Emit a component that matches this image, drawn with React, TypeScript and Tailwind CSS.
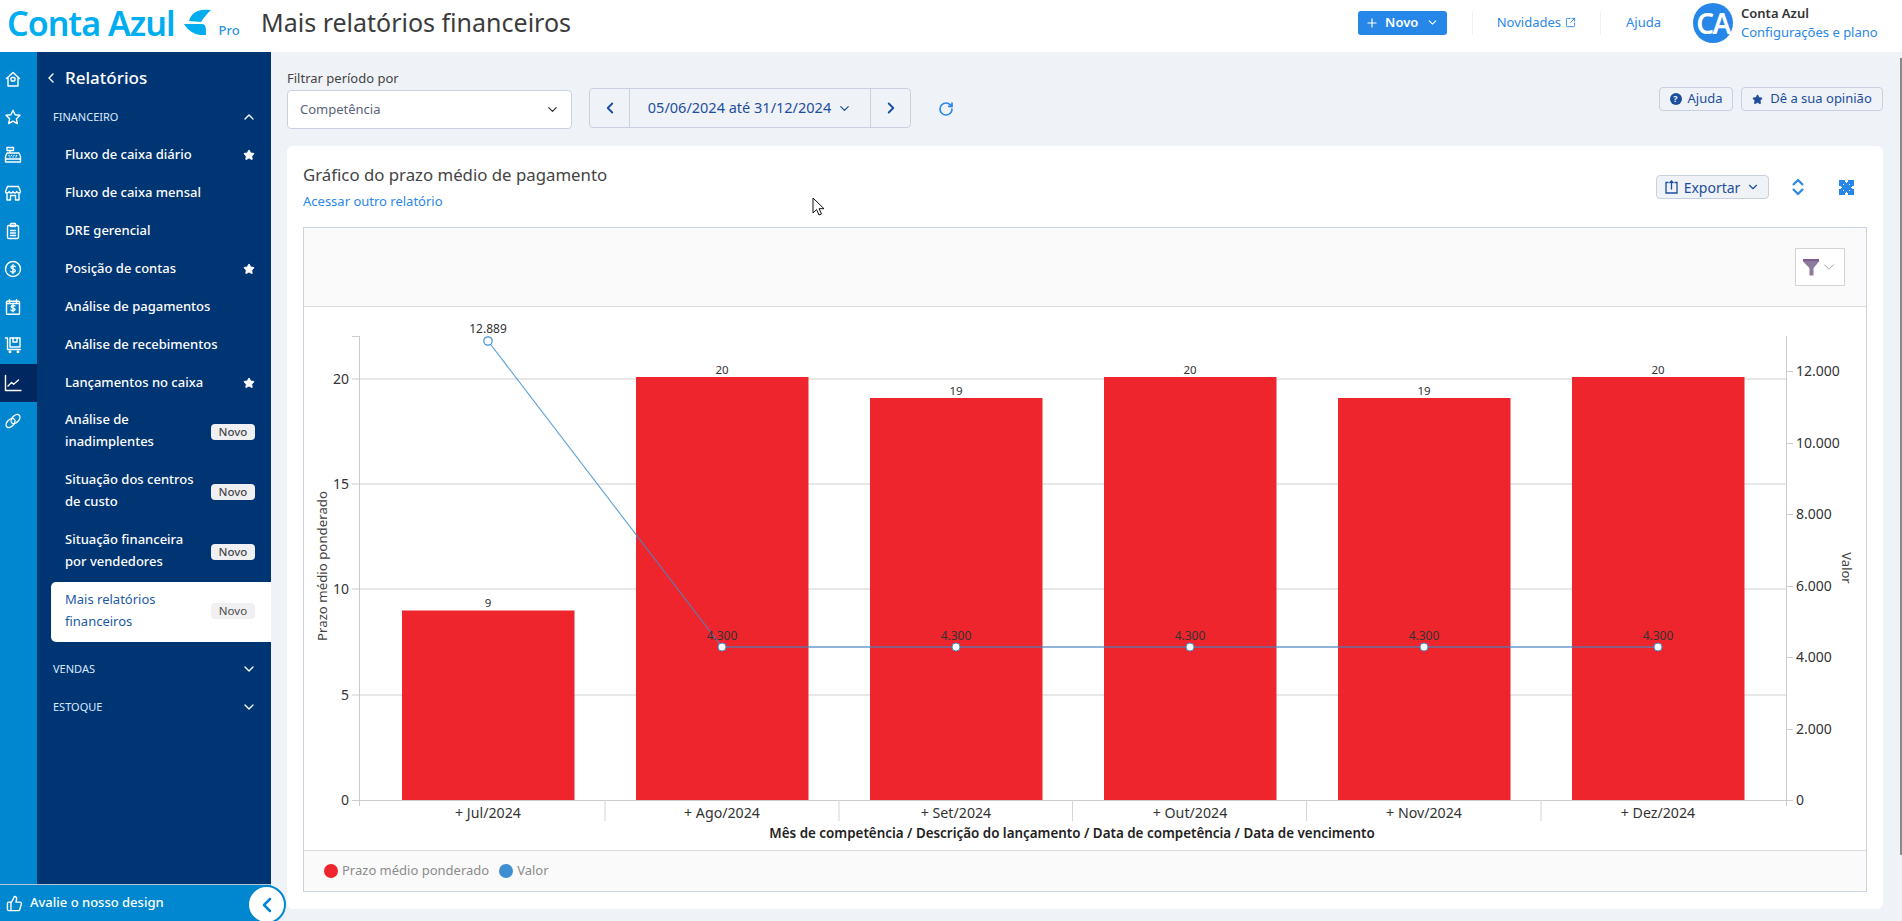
import React from "react";
import { ChevronLeft, ChevronRight, ChevronDown, ChevronUp, Star, Plus, RotateCw, SquareArrowOutUpRight, ThumbsUp } from "lucide-react";

const S = { fill: "none", stroke: "white", strokeWidth: 1.4, strokeLinecap: "round" as const, strokeLinejoin: "round" as const };

function RailIcon({ i }: { i: number }) {
  const c = (
    [
      <g key="h"><path d="M2.5 8.5 9 2.5l6.5 6M4 7.5V16h10V7.5" /><rect x="7" y="7.5" width="4" height="3.5" rx="1" /></g>,
      <path key="s" d="M9 2.2l2.1 4.5 4.9.6-3.6 3.4.9 4.9L9 13.2l-4.3 2.4.9-4.9L2 7.3l4.9-.6z" />,
      <g key="r"><rect x="3" y="1.5" width="6.500" height="3" /><path d="M6 4.500v2.500M3 7h12l1.500 3.500v5.500h-15v-5.500zM1.500 13h15M5 9.500h0M7.500 9.500h0M10 9.500h0M12.500 9.500h0M6 11h0M9 11h0M12 11h0" /></g>,
      <g key="st"><path d="M3.500 2.500h11l2 5c0 2-3 2-3.700 0-.6 2-3 2-3.800 0-.8 2-3.200 2-3.800 0-.7 2-3.700 2-3.700 0zM3 10v6h3.500v-4.500h5V16H15v-6" /></g>,
      <g key="c"><rect x="3.500" y="3.500" width="11" height="13" rx="1.200" /><rect x="6.500" y="1.500" width="5" height="3" rx=".6" /><path d="M6.500 8.500h5M6.500 11h5M6.500 13.500h5" /></g>,
      <g key="d"><circle cx="9" cy="9" r="7.500" /><path d="M11.200 6.600C10.600 5.600 7 5.400 7 7.300c0 2 4.300 1.300 4.300 3.400 0 1.900-3.700 1.800-4.500.7M9 4.600v8.800" /></g>,
      <g key="cd"><rect x="2.500" y="3.200" width="13" height="13" rx=".8" /><path d="M5.500 1.500v3M12.500 1.500v3M2.500 5.500h13M11 8c-.5-.8-3.800-.9-3.800.7 0 1.800 3.800 1 3.800 2.800 0 1.600-3.300 1.500-4 .6M9 6.800v7" /></g>,
      <g key="cb"><path d="M1.500 2h2v11.500h13" /><rect x="6" y="2" width="10" height="9" /><path d="M9 2v4h4V2" /><circle cx="6" cy="15.700" r=".8" /><circle cx="14" cy="15.700" r=".8" /></g>,
      <g key="ch"><path d="M1.500 1.500v15h15.500" /><path d="M4 12l3.600-3.500 2 1.700L14.500 6" /></g>,
      <g key="l"><ellipse cx="6.500" cy="11" rx="5.400" ry="3.400" transform="rotate(-48 6.500 11)" /><ellipse cx="11.500" cy="7" rx="5.400" ry="3.400" transform="rotate(-48 11.500 7)" /></g>,
    ] as React.ReactNode[]
  )[i];
  return (
    <svg width="18" height="18" viewBox="0 0 18 18" {...S}>
      {c}
    </svg>
  );
}

function Badge() {
  return <span className="flex h-[16px] w-[44px] shrink-0 items-center justify-center rounded-[4px] bg-[#f0f0f2] text-[11.5px] text-[#4a4a4a]">Novo</span>;
}

function FilledStar() {
  return <Star size={12} className="shrink-0 fill-white text-white" />;
}

function NavItem({ label, star }: { label: string; star?: boolean }) {
  return (
    <div className="flex h-[38px] items-center justify-between pl-[28px] pr-[16px] text-[13px] font-medium text-white">
      <span>{label}</span>
      {star && <FilledStar />}
    </div>
  );
}

function NavItem2({ a, b }: { a: string; b: string }) {
  return (
    <div className="flex h-[60px] items-center justify-between pl-[28px] pr-[16px] text-[13px] font-medium leading-[22px] text-white">
      <span className="mb-[4px]">
        {a}
        <br />
        {b}
      </span>
      <span className="mb-[1px]">
        <Badge />
      </span>
    </div>
  );
}

function Section({ label, open }: { label: string; open?: boolean }) {
  return (
    <div className="flex h-[38px] items-center justify-between pl-[16px] pr-[14px] text-[11px] text-[#dbe9ff]">
      <span>{label}</span>
      {open ? <ChevronUp size={16} className="text-white" /> : <ChevronDown size={16} className="text-white" />}
    </div>
  );
}

function Sidebar() {
  return (
    <aside className="relative flex w-[271px] shrink-0 flex-col">
      <div className="flex flex-1">
        <div className="flex w-[37px] flex-col bg-[#0087cf] pt-[8px]">
          {[0, 1, 2, 3, 4, 5, 6, 7, 8, 9].map((i) => (
            <div key={i} className={"flex h-[38px] items-center pl-[4px] " + (i === 8 ? "bg-[#00275f]" : "")}>
              <RailIcon i={i} />
            </div>
          ))}
        </div>
        <div className="flex flex-1 flex-col bg-[#003574] pt-[9px]">
          <div className="flex h-[37px] items-center pb-[3px] pl-[6px] text-[17px] font-medium text-white">
            <ChevronLeft size={16} className="mr-[6px]" />
            Relatórios
          </div>
          <Section label="FINANCEIRO" open />
          <NavItem label="Fluxo de caixa diário" star />
          <NavItem label="Fluxo de caixa mensal" />
          <NavItem label="DRE gerencial" />
          <NavItem label="Posição de contas" star />
          <NavItem label="Análise de pagamentos" />
          <NavItem label="Análise de recebimentos" />
          <NavItem label="Lançamentos no caixa" star />
          <NavItem2 a="Análise de" b="inadimplentes" />
          <NavItem2 a="Situação dos centros" b="de custo" />
          <NavItem2 a="Situação financeira" b="por vendedores" />
          <div className="ml-[14px] flex h-[60px] items-center justify-between rounded-l-[5px] bg-white pl-[14px] pr-[16px] text-[13px] leading-[22px] text-[#1d5aa6]">
            <span className="mb-[4px]">
              Mais relatórios
              <br />
              financeiros
            </span>
            <span className="mb-[2px]">
              <Badge />
            </span>
          </div>
          <div className="mt-[8px]">
            <Section label="VENDAS" />
            <Section label="ESTOQUE" />
          </div>
        </div>
      </div>
      <div className="flex h-[37px] items-center border-t border-[#b9c4d4] bg-[#0087cf] pl-[6px] text-[13px] font-medium text-white">
        <ThumbsUp size={17} className="mr-[7px]" />
        Avalie o nosso design
      </div>
      <div className="absolute left-[247px] top-[833px] flex h-[39px] w-[39px] items-center justify-center rounded-full border-2 border-[#0087cf] bg-white text-[#0087cf]">
        <ChevronLeft size={24} strokeWidth={2.5} />
      </div>
    </aside>
  );
}

function Header() {
  return (
    <header className="flex h-[52px] shrink-0 items-center bg-white pb-[7px]">
      <div className="flex w-[261px] items-center pl-[7px]">
        <span className="text-[34px] font-semibold leading-none tracking-[-1px] text-[#00aeef]">Conta Azul</span>
        <svg width="27" height="26" viewBox="0 0 27 26" className="ml-[9px] -mt-[2px]" fill="#00aeef">
          <path d="M27 1C18 0 8 1 5 12L17 13C20 8 23 5 27 1z" />
          <path d="M0 15L18 15C22 15 22 19 22 26C12 27 5 23 0 15z" />
        </svg>
        <span className="ml-[8px] mt-[16px] text-[13px] font-medium text-[#2b95dd]">Pro</span>
      </div>
      <h1 className="text-[25px] font-normal text-[#3b3b3b]">Mais relatórios financeiros</h1>
      <div className="ml-auto flex items-center">
        <button className="flex h-[24px] w-[89px] items-center justify-center rounded-[3px] bg-[#2687e9] text-[13px] font-semibold text-white">
          <Plus size={14} className="mr-[6px]" />
          Novo
          <ChevronDown size={13} className="ml-[8px]" />
        </button>
        <div className="ml-[25px] h-[24px] w-[1px] bg-[#edf0f5]" />
        <span className="ml-[24px] text-[13px] text-[#2b87e8]">Novidades</span>
        <SquareArrowOutUpRight size={11} className="ml-[4px] text-[#2b87e8]" />
        <div className="ml-[24px] h-[24px] w-[1px] bg-[#edf0f5]" />
        <span className="ml-[25px] text-[13px] text-[#2b87e8]">Ajuda</span>
        <div className="ml-[32px] flex h-[40px] w-[40px] items-center justify-center rounded-full bg-[#2687e9] text-[28px] font-semibold tracking-[-1.5px] text-white">CA</div>
        <div className="ml-[8px] mr-[24px] flex w-[137px] flex-col text-[13px] leading-[19px]">
          <span className="font-semibold text-[#333]">Conta Azul</span>
          <span className="text-[#2b87e8]">Configurações e plano</span>
        </div>
      </div>
    </header>
  );
}

function Toolbar() {
  return (
    <div className="flex h-[94px] shrink-0">
      <div className="flex w-[285px] flex-col pt-[17px]">
        <span className="text-[13px] leading-[18px] text-[#444]">Filtrar período por</span>
        <div className="mt-[3px] flex h-[39px] items-center justify-between rounded-[4px] border border-[#c9d1e0] bg-white pl-[12px] pr-[11px] text-[13px] text-[#5a6478]">
          Competência
          <ChevronDown size={15} className="text-[#333]" />
        </div>
      </div>
      <div className="ml-[17px] mt-[36px] flex h-[40px] w-[322px] rounded-[4px] border border-[#c9d1e0] text-[#1d4e9e]">
        <div className="flex w-[40px] items-center justify-center border-r border-[#c9d1e0]">
          <ChevronLeft size={18} strokeWidth={2.5} />
        </div>
        <div className="flex flex-1 items-center justify-center text-[14.5px]">
          05/06/2024 até 31/12/2024
          <ChevronDown size={15} className="ml-[6px]" />
        </div>
        <div className="flex w-[40px] items-center justify-center border-l border-[#c9d1e0]">
          <ChevronRight size={18} strokeWidth={2.5} />
        </div>
      </div>
      <RotateCw size={16} strokeWidth={2.5} className="ml-[27px] mt-[49px] text-[#2b87e8]" />
      <div className="ml-auto mt-[35px] flex h-[24px] gap-[8px] text-[13px] text-[#1d4e9e]">
        <div className="flex w-[74px] items-center justify-center gap-[6px] rounded-[4px] border border-[#c9d1e0]">
          <span className="flex h-[12px] w-[12px] items-center justify-center rounded-full bg-[#1d4e9e] text-[9px] font-bold text-[#eff2f7]">?</span>
          Ajuda
        </div>
        <div className="flex w-[142px] items-center justify-center gap-[7px] rounded-[4px] border border-[#c9d1e0]">
          <Star size={11} className="fill-[#1d4e9e] text-[#1d4e9e]" />
          Dê a sua opinião
        </div>
      </div>
    </div>
  );
}

const RED = "#ee252c";
const bars = [
  { x: 402, top: 610.5, label: "9", c: "+ Jul/2024" },
  { x: 636, top: 377, label: "20", c: "+ Ago/2024" },
  { x: 870, top: 398, label: "19", c: "+ Set/2024" },
  { x: 1104, top: 377, label: "20", c: "+ Out/2024" },
  { x: 1338, top: 398, label: "19", c: "+ Nov/2024" },
  { x: 1572, top: 377, label: "20", c: "+ Dez/2024" },
];

function Chart() {
  const left = [
    [379, "20"],
    [484, "15"],
    [589, "10"],
    [695, "5"],
    [800, "0"],
  ] as const;
  const right = [
    [800, "0"],
    [729, "2.000"],
    [657, "4.000"],
    [586, "6.000"],
    [514, "8.000"],
    [443, "10.000"],
    [371, "12.000"],
  ] as const;
  const pts = bars.map((b, i) => [b.x + 86, i === 0 ? 341 : 647] as const);
  return (
    <svg viewBox="304 307 1561 543" className="block h-[543px] w-[1561px]" fontSize="14" fill="#333">
      {left.slice(0, 4).map(([y]) => (
        <line key={y} x1="352" x2="1786" y1={y} y2={y} stroke="#dfdfdf" strokeWidth={1.5} />
      ))}
      {bars.map((b) => (
        <rect key={b.x} x={b.x} y={b.top} width="172.500" height={800 - b.top} fill={RED} />
      ))}
      <line x1="359.500" x2="359.500" y1="336" y2="806" stroke="#ccc" />
      <line x1="352" x2="359" y1="336.500" y2="336.500" stroke="#ccc" />
      <line x1="1786.500" x2="1786.500" y1="336" y2="806" stroke="#ccc" />
      <line x1="352" x2="1793" y1="800.500" y2="800.500" stroke="#ccc" />
      {[605, 839, 1072.500, 1306.500, 1541].map((x) => (
        <line key={x} x1={x} x2={x} y1="800" y2="821" stroke="#d5d5d5" />
      ))}
      {right.map(([y]) => (
        <line key={y} x1="1787" x2="1793" y1={y + 0.5} y2={y + 0.5} stroke="#ccc" />
      ))}
      {left.map(([y, t]) => (
        <text key={t} x="349" y={y + 5} textAnchor="end">
          {t}
        </text>
      ))}
      {right.map(([y, t]) => (
        <text key={t} x="1796" y={y + 5}>
          {t}
        </text>
      ))}
      {bars.map((b) => (
        <text key={b.c} x={b.x + 86} y={b.top - 3.500} textAnchor="middle" fontSize="11.500">
          {b.label}
        </text>
      ))}
      {bars.map((b) => (
        <text key={b.c} x={b.x + 86} y="818" textAnchor="middle" fontSize="14.200">
          {b.c}
        </text>
      ))}
      <text x="1072" y="838" textAnchor="middle" fontWeight="600" fill="#222" fontSize="13.400">
        Mês de competência / Descrição do lançamento / Data de competência / Data de vencimento
      </text>
      <text transform="translate(327 566) rotate(-90)" textAnchor="middle" fill="#444" fontSize="13.250">
        Prazo médio ponderado
      </text>
      <text transform="translate(1842 568) rotate(90)" textAnchor="middle" fill="#444" fontSize="13">
        Valor
      </text>
      <line x1={pts[0][0]} y1={pts[0][1]} x2={pts[1][0]} y2={pts[1][1]} stroke="#3d8fd1" strokeOpacity="0.85" strokeWidth="1.100" />
      <line x1={pts[1][0]} y1="647" x2={pts[5][0]} y2="647" stroke="#4a80c0" strokeOpacity="0.6" strokeWidth="2" />
      {pts.map(([x, y], i) => (
        <circle key={x} cx={x} cy={y} r={i === 0 ? 4.200 : 4} fill="white" stroke="#3d8fd1" strokeWidth={i === 0 ? 1.200 : 1} />
      ))}
      <text x="488" y="333" textAnchor="middle" fontSize="12">
        12.889
      </text>
      {pts.slice(1).map(([x]) => (
        <text key={x} x={x} y="640" textAnchor="middle" fontSize="12">
          4.300
        </text>
      ))}
    </svg>
  );
}

function Card() {
  return (
    <section className="flex h-[763px] shrink-0 flex-col rounded-[6px] bg-white">
      <div className="flex h-[81px] shrink-0 items-start justify-between pl-[16px] pr-[29px]">
        <div className="pt-[17px]">
          <h2 className="text-[16.8px] font-normal leading-[24px] text-[#444]">Gráfico do prazo médio de pagamento</h2>
          <a className="mt-[5px] block text-[13px] leading-[18px] text-[#2b87e8]">Acessar outro relatório</a>
        </div>
        <div className="flex items-center pt-[29px]">
          <button className="flex h-[24px] w-[113px] items-center justify-center rounded-[4px] border border-[#c9d1e0] bg-[#eff2f7] text-[14px] text-[#1d4e9e]">
            <svg width="13" height="14" viewBox="0 0 13 14" fill="none" stroke="#1d4e9e" strokeWidth="1.300" className="mr-[6px]">
              <path d="M3.500 2.500H1v10.500h11V2.500H9.500M6.500 9.500V1M4.500 3l2-2 2 2" />
            </svg>
            Exportar
            <ChevronDown size={14} className="ml-[6px]" />
          </button>
          <svg width="14" height="18" viewBox="0 0 14 18" fill="none" stroke="#2b87e8" strokeWidth="2.200" className="ml-[22px]">
            <path d="M2 7l5-5 5 5M2 11l5 5 5-5" />
          </svg>
          <svg width="15" height="15" viewBox="0 0 15 15" className="ml-[34px]" fill="#2687e9" shapeRendering="crispEdges">
            <path d="M0 0h15v15H0z" />
            <path d="M6 0h3v2H8v1H7V2H6zM6 15h3v-2H8v-1H7v1H6zM0 6v3h2V8h1V7H2V6zM15 6v3h-2V8h-1V7h1V6z" fill="white" />
            <path d="M4 4h1v1H4zM10 4h1v1h-1zM4 10h1v1H4zM10 10h1v1h-1z" fill="white" />
          </svg>
        </div>
      </div>
      <div className="mx-[16px] flex h-[665px] flex-col border border-[#ccd3e0]">
        <div className="flex h-[79px] shrink-0 items-start justify-end border-b border-[#dcdcdc] bg-[#fafafa] pr-[21px] pt-[20px]">
          <div className="flex h-[38px] w-[50px] items-center justify-center border border-[#d4d4d4] bg-white">
            <svg width="18" height="18" viewBox="0 0 18 18">
              <path d="M1 1h16v2.500L11.500 10v7.500h-4V10L1 3.500z" fill="#8b7a9e" />
              <rect x="1" y="1" width="16" height="2" fill="#7c5c8c" />
            </svg>
            <ChevronDown size={18} strokeWidth={1} className="text-[#888]" />
          </div>
        </div>
        <div className="flex-1 bg-white">
          <Chart />
        </div>
        <div className="flex h-[41px] shrink-0 items-center border-t border-[#dcdcdc] bg-[#fafafa] pl-[20px] text-[13px] text-[#8c8c8c]">
          <span className="h-[14px] w-[14px] rounded-full bg-[#ee252c]" />
          <span className="ml-[4px]">Prazo médio ponderado</span>
          <span className="ml-[10px] h-[14px] w-[14px] rounded-full bg-[#3d8fd1]" />
          <span className="ml-[4px]">Valor</span>
        </div>
      </div>
    </section>
  );
}

export default function App() {
  return (
    <div className="relative flex h-screen w-full flex-col overflow-hidden bg-[#eff2f7] font-['Noto_Sans',sans-serif]">
      <Header />
      <div className="flex min-h-0 flex-1">
        <Sidebar />
        <main className="flex min-w-0 flex-1 flex-col pl-[16px] pr-[19px]">
          <Toolbar />
          <Card />
        </main>
      </div>
      <div className="absolute right-0 top-[58px] h-[797px] w-[2px] bg-[#8a8a8a]" />
      <svg className="absolute left-[812px] top-[197px]" width="14" height="20" viewBox="0 0 14 20" fill="white" stroke="#111" strokeWidth="1">
        <path d="M1 1v15l3.600-3.400 2.400 5.400 2.500-1.100-2.400-5.200H12z" />
      </svg>
    </div>
  );
}
